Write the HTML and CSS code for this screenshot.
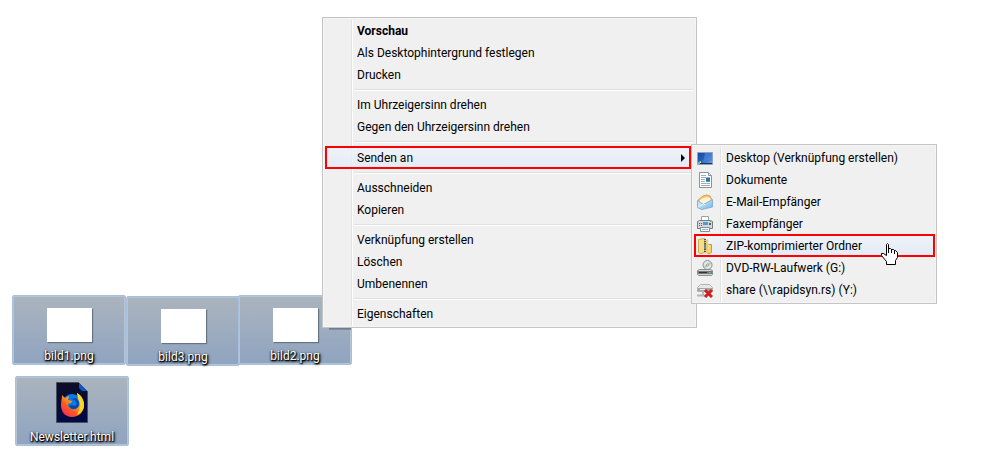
FILE: index.html
```html
<!DOCTYPE html>
<html lang="de">
<head>
<meta charset="UTF-8">
<title>Senden an ZIP-komprimierter Ordner</title>
<link rel="stylesheet" href="styles.css">
</head>
<body>

<main class="desktop">

  <button class="file file-bild1"><span class="thumb"></span><span class="file-name">bild1.png</span></button>
  <button class="file file-bild3"><span class="thumb"></span><span class="file-name">bild3.png</span></button>
  <button class="file file-bild2"><span class="thumb"></span><span class="file-name">bild2.png</span></button>
  <button class="file file-newsletter">
    <svg class="file-icon" viewBox="0 0 32 41">
      <defs>
        <linearGradient id="page" x1="0" y1="0" x2="0" y2="1"><stop offset="0" stop-color="#0d0d27"/><stop offset="1" stop-color="#000b45"/></linearGradient>
        <linearGradient id="fox" x1="0.9" y1="0" x2="0.1" y2="1"><stop offset="0" stop-color="#fff44a"/><stop offset="0.35" stop-color="#ffb31a"/><stop offset="0.65" stop-color="#ff5a20"/><stop offset="1" stop-color="#f0206a"/></linearGradient>
      </defs>
      <path d="M.5.5h22l9 9v31H.5z" fill="url(#page)" stroke="#454e5c"/>
      <path d="M23 1v5l3 3h5z" fill="#0a57c8"/>
      <circle cx="16" cy="22" r="10" fill="#0a7be8"/>
      <path d="M6 13l3 3 4-2-1 4 4 1-1 2-3 1c0 4 3 6 7 5 5-1 6-6 4-10l-2-6c5 3 7 8 7 12 0 7-5 12-12 12S5 30 5 23c0-4 1-7 1-10z" fill="url(#fox)"/>
      <path d="M15 17l4 1 2 4-2 2-3-1-3 1c2 3 5 4 8 2 3-3 2-7-1-10z" fill="#1243a5"/>
      <path d="M21 11c5 3 7 8 7 12 0 5-3 8-7 10 3-5 4-11 1-16z" fill="#ffd528"/>
    </svg>
    <span class="file-name">Newsletter.html</span>
  </button>

  <nav class="menu context-menu" aria-label="Kontextmenü">
    <button class="item default">Vorschau</button>
    <button class="item">Als Desktophintergrund festlegen</button>
    <button class="item">Drucken</button>
    <hr>
    <button class="item">Im Uhrzeigersinn drehen</button>
    <button class="item">Gegen den Uhrzeigersinn drehen</button>
    <hr>
    <button class="item active" aria-haspopup="true">Senden an
      <svg class="arrow" viewBox="0 0 4 8"><path d="M0 0l4 4-4 4z"/></svg>
    </button>
    <hr>
    <button class="item">Ausschneiden</button>
    <button class="item">Kopieren</button>
    <hr>
    <button class="item">Verknüpfung erstellen</button>
    <button class="item">Löschen</button>
    <button class="item">Umbenennen</button>
    <hr>
    <button class="item">Eigenschaften</button>
  </nav>

  <nav class="menu send-menu" aria-label="Senden an">
    <button class="item">
      <svg class="icon" viewBox="0 0 16 16">
        <defs><linearGradient id="screen" x1="0" y1="0" x2="1" y2="1"><stop offset="0" stop-color="#17479c"/><stop offset="0.5" stop-color="#2461bd"/><stop offset="1" stop-color="#76aef0"/></linearGradient></defs>
        <path d="M.5 2.500h15v12H.5z" fill="url(#screen)" stroke="#8ea3bf"/>
        <path d="M8 3h7v6q-5 1-9 3z" fill="#5b97e2" opacity=".5"/>
        <path d="M1 13h14v1H1z" fill="#1b3358"/>
        <path d="M2 11h1v1H2z" fill="#e8582c"/><path d="M3 11h1v1H3z" fill="#8fd14f"/><path d="M3 12h1v1H3z" fill="#ffd83a"/><path d="M1 12h2v2H1z" fill="#58b4f5"/>
      </svg>Desktop (Verknüpfung erstellen)</button>
    <button class="item">
      <svg class="icon" viewBox="0 0 16 16">
        <path d="M2.500.5h9l3 3v12h-12z" fill="#fff" stroke="#8b9496"/>
        <path d="M11.500.5v3h3" fill="#dce3e6" stroke="#8b9496"/>
        <path d="M4 3.500h5M4 5.500h9M4 7.500h4M4 9.500h4M4 11.500h9M4 13.500h9" stroke="#9cafbd"/>
        <path d="M9 6h4v4H9z" fill="#2a72bd"/><path d="M9 9h4v1H9z" fill="#4da68a"/>
      </svg>Dokumente</button>
    <button class="item">
      <svg class="icon" viewBox="0 0 16 16">
        <defs><linearGradient id="mail" x1="0" y1="0" x2="1" y2="1"><stop offset="0" stop-color="#e6f5ff"/><stop offset="1" stop-color="#6fb2e4"/></linearGradient></defs>
        <path d="M1 6l5-4q4-2 7 0l2 4-1 6-12 2z" fill="#f7c66d" stroke="#d8a353"/>
        <path d="M3 6q5-4 10-2l1 4-6 4-5-3z" fill="#fff4d7"/>
        <path d="M.5 6.500l6 4 9-5v7.500l-11 2.500-4-2z" fill="url(#mail)" stroke="#85b3d6"/>
        <path d="M1 13l5.500-3 1.500 1" fill="none" stroke="#eefaff"/>
      </svg>E-Mail-Empfänger</button>
    <button class="item">
      <svg class="icon" viewBox="0 0 16 16">
        <path d="M4.500.5h7v5h-7z" fill="#fff" stroke="#9ba2a8"/>
        <path d="M.5 5.500l2-1h11l2 1v7H.5z" fill="#d4d8dc" stroke="#747d85"/>
        <path d="M2 7h1v1H2zm2 0h1v1H4zM2 9h1v1H2zm2 0h1v1H4zm8-2h2v2h-2z" fill="#52616d"/>
        <path d="M6 6h5v3H6z" fill="#4c9dd8"/><path d="M13 5h1v1h-1z" fill="#48bd43"/>
        <path d="M3.500 11.500h9v4h-9z" fill="#fff" stroke="#858e95"/>
        <path d="M5 13.500h6" stroke="#90b6d0"/>
      </svg>Faxempfänger</button>
    <button class="item active">
      <svg class="icon" viewBox="0 0 16 16">
        <path d="M1.500 1.500l6-1v14l-4 1-2-1z" fill="#f5df86" stroke="#ceac4b"/>
        <path d="M8 1l3 1v13H8z" fill="#eccc64"/>
        <path d="M11.500 6.500h3v8l-2 1h-2" fill="#f2d672" stroke="#c29e3b"/>
        <path d="M8 1v14" stroke="#4b5768" stroke-width="2" stroke-dasharray="1 1"/>
        <path d="M8 6v5" stroke="#71839a" stroke-width="2"/>
      </svg>ZIP-komprimierter Ordner</button>
    <button class="item">
      <svg class="icon" viewBox="0 0 16 16">
        <circle cx="10.500" cy="5" r="4.500" fill="#e1e8e6" stroke="#89908f"/>
        <path d="M10.500 5l3-2M10.500 5l-3 2" stroke="#a9cf9b" stroke-width="2"/><circle cx="10.500" cy="5" r="1" fill="#fff" stroke="#979d9c"/>
        <path d="M.5 10.500l2-1h11l2 1v4l-1 1h-13l-1-1z" fill="#d2d5d5" stroke="#8d9090"/>
        <path d="M1 11h14v3H1z" fill="#777b7b"/><path d="M2 12h8v1H2z" fill="#333"/><path d="M12 12h2v1h-2z" fill="#54d34b"/>
      </svg>DVD-RW-Laufwerk (G:)</button>
    <button class="item">
      <svg class="icon" viewBox="0 0 16 16">
        <path d="M.5 5.500l3-3h9l3 3v4H.5z" fill="#e6e7e7" stroke="#b0b2b2"/>
        <path d="M1 6h14v3H1z" fill="#a5a7a7"/><path d="M3 7h5v1H3z" fill="#eee"/>
        <path d="M6 10v3M0 13.500h8" stroke="#b4b6b6" stroke-width="2"/>
        <path d="M8 8l7 7M15 8l-7 7" stroke="#cf2020" stroke-width="3"/>
      </svg>share (\\rapidsyn.rs) (Y:)</button>
  </nav>

  <svg class="cursor" viewBox="0 0 17 22">
    <path d="M5.500 1.500l1-1 1 1v4h2l1 1h2l1 1h1l2 2v5l-2 3v4h-9v-3l-5-6v-2h2l3 2z" fill="#fff" stroke="#000"/>
    <path d="M7.500 5v5M10.500 6v4M13.500 7v4" stroke="#000"/>
  </svg>

</main>

</body>
</html>
```

FILE: styles.css
```css
* {
  box-sizing: border-box;
}

body {
  margin: 0;
  background: #fff;
  color: #000;
  font-family: Roboto, "Open Sans", sans-serif;
  font-size: 12px;
}

button {
  border: 0;
  padding: 0;
  background: none;
  color: inherit;
  font: inherit;
}

.desktop {
  position: relative;
  min-height: 100vh;
  overflow: hidden;
}

/* desktop icons */
.file {
  position: absolute;
  display: flex;
  flex-direction: column;
  align-items: center;
  justify-content: flex-end;
  width: 114px;
  height: 70px;
  border: 1px solid #a9c0dc;
  border-radius: 2px;
  box-shadow: inset 0 0 0 1px #b5c3d2;
  background: linear-gradient(#abb4be, #8fa4c0);
}

.file-bild1 {
  left: 12px;
  top: 295px;
}

.file-bild3 {
  left: 126px;
  top: 296px;
}

.file-bild2 {
  left: 238px;
  top: 295px;
}

/* shadow of the context menu, only seen on the icon */
.file-bild2::after {
  content: "";
  position: absolute;
  right: 0;
  top: 31px;
  width: 22px;
  height: 3px;
  background: linear-gradient(#56606c, #8b98a8);
}

.file-newsletter {
  left: 15px;
  top: 376px;
}

.thumb {
  width: 45px;
  height: 34px;
  margin-bottom: 6px;
  background: #fff;
  box-shadow: 1px 1px 1px #667482;
}

.file-icon {
  width: 32px;
  height: 41px;
  margin-bottom: 6px;
}

.file-name {
  line-height: 16px;
  color: #fff;
  text-shadow: 1px 1px 1px #000, 0 1px 2px #000, 1px 1px 3px #000;
}

/* menus */
.menu {
  position: absolute;
  display: flex;
  flex-direction: column;
  padding: 2px;
  border: 1px solid #c4c4c4;
  background: linear-gradient(90deg, #e2e3e3 1px, #fff 1px, #fff 2px, transparent 2px) 28px 2px no-repeat #f0f0f0;
  box-shadow: inset 0 0 0 1px #f5f5f5;
}

.context-menu {
  left: 322px;
  top: 17px;
  width: 375px;
}

.send-menu {
  left: 691px;
  top: 144px;
  width: 246px;
}

.item {
  display: flex;
  align-items: center;
  height: 22px;
  padding-left: 32px;
  text-align: left;
  white-space: nowrap;
}

.send-menu .item {
  gap: 13px;
  padding-left: 3px;
}

.default {
  font-weight: bold;
}

.active {
  height: 23px;
  background: linear-gradient(rgba(240, 244, 250, 0.8), rgba(224, 233, 247, 0.8));
  outline: 2px solid #f00;
  outline-offset: -2px;
}

.context-menu .active {
  margin-right: 3px;
}

.send-menu .active {
  margin-top: -1px;
  margin-right: -1px;
}

.arrow {
  width: 4px;
  height: 8px;
  margin-left: auto;
  margin-right: 6px;
}

.icon {
  width: 16px;
  height: 16px;
}

hr {
  width: calc(100% - 29px);
  height: 2px;
  margin: 3px 0 3px auto;
  border: 0;
  border-top: 1px solid #e0e0e0;
  background: #fff;
}

.cursor {
  position: absolute;
  left: 881px;
  top: 243px;
  width: 17px;
  height: 22px;
}
```
